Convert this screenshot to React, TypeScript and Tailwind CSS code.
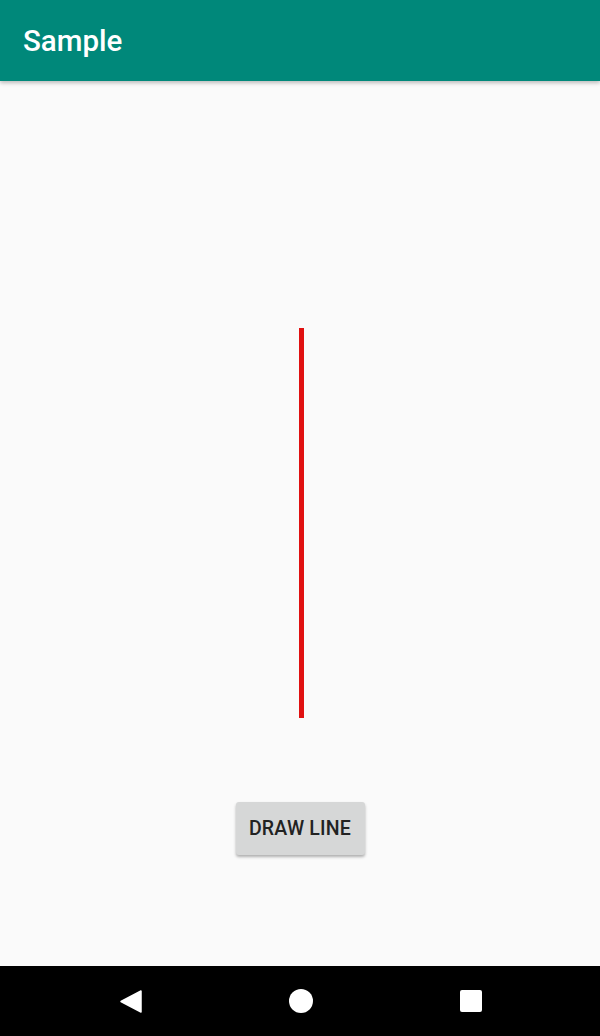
export default function App() {
  return (
    <div className="flex h-[1036px] w-[600px] flex-col bg-[#fafafa] font-['Roboto',sans-serif]">
      <header className="relative z-10 flex h-[81px] shrink-0 items-center bg-[#00887a] pl-[23px] pt-[3px] shadow-[0_2px_4px_rgba(0,0,0,0.25)]">
        <h1 className="text-[29.5px] font-medium leading-none text-white">Sample</h1>
      </header>

      <main className="flex flex-1 flex-col items-center pt-[247px]">
        <div className="ml-[2px] h-[390px] w-[5px] bg-[#e01010]" />
        <button className="mt-[84px] h-[53px] w-[129px] rounded-[3px] bg-[#d6d7d7] text-[19.5px] font-medium tracking-[0.2px] text-[#222] shadow-[0_2px_3px_rgba(0,0,0,0.3)]">
          DRAW LINE
        </button>
      </main>

      <nav className="flex h-[70px] shrink-0 items-center bg-black">
        <div className="flex w-full items-center justify-between pl-[120px] pr-[118px]">
          <svg width="22" height="23" viewBox="0 0 22 23">
            <path d="M21 1 L21 22 L1 11.5 Z" fill="#fff" stroke="#fff" strokeWidth="1.5" strokeLinejoin="round" />
          </svg>
          <div className="h-[24px] w-[24px] rounded-full bg-white" />
          <div className="h-[22px] w-[22px] rounded-[2px] bg-white" />
        </div>
      </nav>
    </div>
  );
}
